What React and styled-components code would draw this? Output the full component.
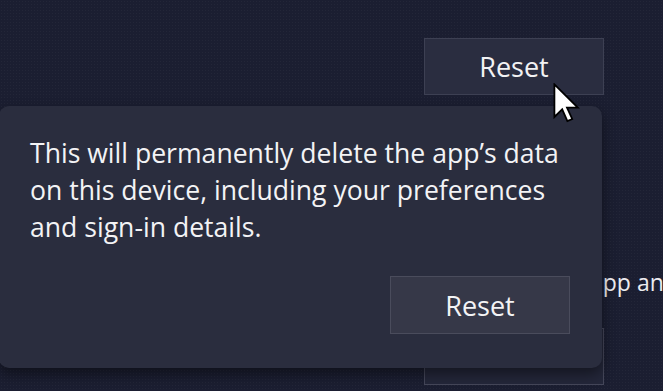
import React from "react";
import styled, { createGlobalStyle } from "styled-components";

const Global = createGlobalStyle`
  html, body { margin: 0; padding: 0; background: #1b1e31; }
  body { font-family: "Open Sans", "Noto Sans", sans-serif; }
`;

const Page = styled.div`
  position: relative;
  width: 663px;
  height: 391px;
  overflow: hidden;
  background-color: #1b1e31;
  background-image: radial-gradient(rgba(255,255,255,0.035) 0.6px, transparent 0.8px);
  background-size: 3px 3px;
`;

const Backdrop = styled.div`
  display: grid;
  grid-template-columns: 180px 1fr;
  grid-template-rows: 57px 233px 57px;
  padding: 38px 0 0 424px;
  align-items: start;
`;

const GhostButton = styled.div`
  box-sizing: border-box;
  width: 180px;
  height: 57px;
  display: flex;
  align-items: center;
  justify-content: center;
  grid-column: 1;
  grid-row: ${p => p.$row};
  background: ${p => (p.$dim ? "#24273a" : "#2a2d40")};
  border: 1.5px solid ${p => (p.$dim ? "#45475a" : "#3d4053")};
  color: #f2f2f4;
  font-size: 27px;
  padding-bottom: 1px;
`;

const BackText = styled.div`
  grid-column: 2;
  grid-row: 1 / span 2;
  margin-left: -14px;
  padding-top: 229px;
  color: #ececf0;
  font-size: 23px;
  white-space: nowrap;
  line-height: 30px;
`;

const Flyout = styled.div`
  position: absolute;
  left: -1px;
  top: 106px;
  width: 603px;
  height: 262px;
  box-sizing: border-box;
  border-radius: 10px;
  background: #2a2d3e;
  box-shadow: 0 6px 14px rgba(0, 0, 0, 0.45);
  padding: 29px 32px 34px 31px;
  display: flex;
  flex-direction: column;
  justify-content: space-between;
`;

const Message = styled.p`
  margin: 0;
  max-width: 538px;
  color: #f3f3f5;
  font-size: 26.6px;
  line-height: 37px;
`;

const Actions = styled.div`
  display: flex;
  justify-content: flex-end;
`;

const ConfirmButton = styled.button`
  box-sizing: border-box;
  width: 180px;
  height: 58px;
  background: #363848;
  border: 1.5px solid #4a4c5c;
  border-radius: 0;
  color: #f3f3f5;
  font-family: inherit;
  font-size: 27px;
  padding: 0;
`;

const Cursor = styled.svg`
  position: absolute;
  left: 553px;
  top: 83px;
`;

export default function App() {
  return (
    <>
      <Global />
      <Page>
        <Backdrop>
          <GhostButton $row={1}>Reset</GhostButton>
          <BackText>app and</BackText>
          <GhostButton $row={3} $dim>Uninstall</GhostButton>
        </Backdrop>
        <Flyout>
          <Message>
            This will permanently delete the app’s data on this device, including your preferences and sign-in details.
          </Message>
          <Actions>
            <ConfirmButton>Reset</ConfirmButton>
          </Actions>
        </Flyout>
        <Cursor width="30" height="40" viewBox="0 0 15 20">
          <path
            d="M0.7 0.7 L0.7 17 L4.6 13.2 L7.2 19 L9.6 18 L7 12.3 L12.4 12.3 Z"
            fill="#ffffff"
            stroke="#000000"
            strokeWidth="0.9"
            strokeLinejoin="miter"
          />
        </Cursor>
      </Page>
    </>
  );
}
